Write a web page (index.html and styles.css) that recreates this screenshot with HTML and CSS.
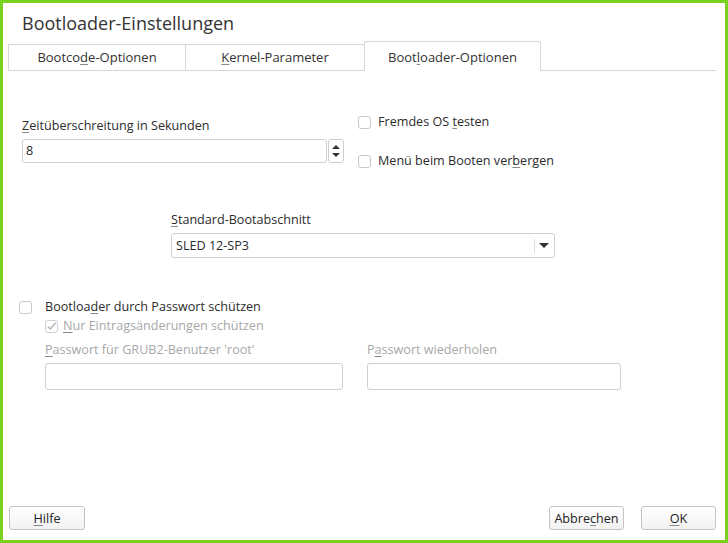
FILE: index.html
```html
<!doctype html>
<html lang="de">
<head>
    <meta charset="UTF-8">
    <title>Bootloader-Einstellungen</title>
    <link rel="stylesheet" href="styles.css">
</head>
<body>
<div class="window">
    <h1 class="title">Bootloader-Einstellungen</h1>

    <div class="tabs">
        <div class="tab">Bootco<u>d</u>e-Optionen</div>
        <div class="tab"><u>K</u>ernel-Parameter</div>
        <div class="tab active">Boot<u>l</u>oader-Optionen</div>
        <div class="tab-rest"></div>
    </div>

    <div class="content">
        <div class="top-row">
            <div class="timeout">
                <div class="label"><u>Z</u>eitüberschreitung in Sekunden</div>
                <div class="spin">
                    <div class="input spin-input">8</div>
                    <div class="spin-btns">
                        <span class="arrow-up"></span>
                        <span class="arrow-down"></span>
                    </div>
                </div>
            </div>
            <div class="checks">
                <div class="check"><span class="box"></span><span>Fremdes OS <u>t</u>esten</span></div>
                <div class="check"><span class="box"></span><span>Menü beim Booten ver<u>b</u>ergen</span></div>
            </div>
        </div>

        <div class="default-section">
            <div class="label"><u>S</u>tandard-Bootabschnitt</div>
            <div class="input combo">
                <span>SLED 12-SP3</span>
                <span class="combo-sep"></span>
                <span class="arrow-down combo-arrow"></span>
            </div>
        </div>

        <div class="password">
            <div class="check main-check"><span class="box"></span><span>Bootloa<u>d</u>er durch Passwort schützen</span></div>
            <div class="password-body">
                <div class="check disabled"><span class="box checked">
                    <svg width="12" height="12" viewBox="0 0 12 12"><path d="M2 6.5 L4.8 9.2 L10.5 2.5" fill="none" stroke="#b4b4b4" stroke-width="1.6"/></svg>
                </span><span><u>N</u>ur Eintragsänderungen schützen</span></div>
                <div class="pw-fields">
                    <div class="pw-field first">
                        <div class="label disabled"><u>P</u>asswort für GRUB2-Benutzer 'root'</div>
                        <div class="input pw-input"></div>
                    </div>
                    <div class="pw-field second">
                        <div class="label disabled">P<u>a</u>sswort wiederholen</div>
                        <div class="input pw-input"></div>
                    </div>
                </div>
            </div>
        </div>
    </div>

    <div class="buttons">
        <div class="btn help"><u>H</u>ilfe</div>
        <div class="spacer"></div>
        <div class="btn cancel">Abbre<u>c</u>hen</div>
        <div class="btn ok"><u>O</u>K</div>
    </div>
</div>
</body>
</html>
```

FILE: styles.css
```css
/*reset*/
*{
    margin:0;
    padding:0;
    box-sizing: border-box;
}
body{
    font-family: "Open Sans", "Noto Sans", sans-serif;
    font-size: 12.6px;
    color: #2c2c2c;
    background: #fff;
}
u{
    text-decoration: underline;
    text-decoration-color: #888;
    text-underline-offset: 2px;
}

.window{
    width: 728px;
    height: 543px;
    border: 3px solid #7ad21c;
    display: flex;
    flex-direction: column;
    background: #fff;
}

.title{
    font-size: 18px;
    font-weight: normal;
    color: #333;
    padding: 9px 0 0 19px;
    height: 38px;
    line-height: 22px;
}

/*tabs*/
.tabs{
    display: flex;
    height: 30px;
    margin: 0 9px 0 5px;
    align-items: flex-end;
}
.tab{
    height: 27px;
    border: 1px solid #d6d6d6;
    border-right: none;
    text-align: center;
    line-height: 25px;
    color: #333;
    font-size: 13px;
}
.tab:nth-child(1){ width: 177px; }
.tab:nth-child(2){ width: 179px; }
.tab.active{
    width: 177px;
    height: 30px;
    line-height: 30px;
    border: 1px solid #d6d6d6;
    border-bottom: none;
    border-radius: 3px 3px 0 0;
    background: #fff;
}
.tab-rest{
    flex: 1;
    border-bottom: 1px solid #d6d6d6;
}

/*content*/
.content{
    padding: 0 0 0 19px;
}
.label{
    line-height: 18px;
    color: #2c2c2c;
}
.input{
    border: 1px solid #cfcfcf;
    border-radius: 3px;
    background: #fff;
}

.top-row{
    display: flex;
    padding-top: 38px;
}
.timeout{
    width: 336px;
    padding-top: 8px;
}
.spin{
    display: flex;
    margin-top: 4px;
}
.spin-input{
    width: 305px;
    height: 24px;
    line-height: 22px;
    padding-left: 3px;
}
.spin-btns{
    width: 16px;
    height: 24px;
    margin-left: 1px;
    border: 1px solid #cfcfcf;
    border-radius: 3px;
    display: flex;
    flex-direction: column;
    align-items: center;
    justify-content: center;
    gap: 4px;
}
.arrow-up{
    width: 0;
    height: 0;
    border-left: 4px solid transparent;
    border-right: 4px solid transparent;
    border-bottom: 4px solid #333;
}
.arrow-down{
    width: 0;
    height: 0;
    border-left: 4px solid transparent;
    border-right: 4px solid transparent;
    border-top: 4px solid #333;
}

.checks{
    display: flex;
    flex-direction: column;
    gap: 21px;
    padding-top: 4px;
}
.check{
    display: flex;
    align-items: center;
    line-height: 18px;
}
.box{
    width: 13px;
    height: 13px;
    border: 1px solid #c8c8c8;
    border-radius: 3px;
    margin-right: 7px;
    display: inline-flex;
    align-items: center;
    justify-content: center;
}

.default-section{
    margin: 41px 0 0 149px;
    width: 384px;
}
.combo{
    margin-top: 4px;
    height: 25px;
    display: flex;
    align-items: center;
    padding-left: 4px;
}
.combo span:first-child{
    flex: 1;
}
.combo-sep{
    width: 1px;
    height: 14px;
    background: #ddd;
    margin-right: 4px;
}
.combo-arrow{
    margin-right: 5px;
    border-left-width: 5px;
    border-right-width: 5px;
    border-top-width: 5px;
}

.password{
    margin-top: 40px;
}
.main-check .box{
    margin-left: -3px;
    margin-right: 13px;
}
.password-body{
    padding-left: 23px;
}
.check.disabled{
    color: #a8a8a8;
    margin-top: 1px;
}
.box.checked{
    border-color: #d0d0d0;
    margin-right: 5px;
}
.label.disabled{
    color: #a8a8a8;
}
.pw-fields{
    display: flex;
    margin-top: 6px;
}
.pw-field.first{
    width: 322px;
}
.pw-field.second{
    width: 254px;
}
.pw-input{
    margin-top: 4px;
    height: 27px;
}
.pw-field.first .pw-input{
    width: 298px;
}

/*buttons*/
.buttons{
    margin-top: auto;
    display: flex;
    padding: 0 9px 10px 6px;
}
.spacer{
    flex: 1;
}
.btn{
    height: 24px;
    line-height: 23px;
    text-align: center;
    border: 1px solid #c4c4c4;
    border-radius: 3px;
    background: linear-gradient(#fff, #f2f2f2);
    color: #222;
}
.btn.help{ width: 76px; }
.btn.cancel{ width: 75px; }
.btn.ok{ width: 75px; margin-left: 17px; }
```
